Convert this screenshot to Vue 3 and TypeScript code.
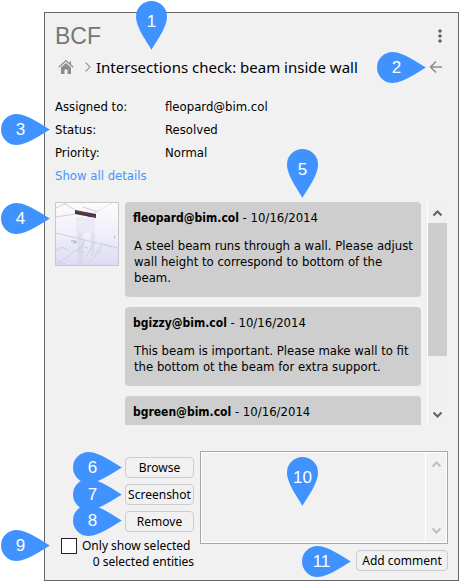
<script setup lang="ts">
import { ref } from 'vue'

interface Detail {
  label: string
  value: string
}

interface Comment {
  author: string
  date: string
  text: string
}

interface Callout {
  id: number
  x: number
  y: number
  dir: 'down' | 'right'
}

const details: Detail[] = [
  { label: 'Assigned to:', value: 'fleopard@bim.col' },
  { label: 'Status:', value: 'Resolved' },
  { label: 'Priority:', value: 'Normal' },
]

const comments: Comment[] = [
  {
    author: 'fleopard@bim.col',
    date: '10/16/2014',
    text: 'A steel beam runs through a wall. Please adjust wall height to correspond to bottom of the beam.',
  },
  {
    author: 'bgizzy@bim.col',
    date: '10/16/2014',
    text: 'This beam is important. Please make wall to fit the bottom ot the beam for extra support.',
  },
  { author: 'bgreen@bim.col', date: '10/16/2014', text: '' },
]

const actions: string[] = ['Browse', 'Screenshot', 'Remove']

// Position of the box around each numbered marker.
const callouts: Callout[] = [
  { id: 1, x: 136, y: 1, dir: 'down' },
  { id: 2, x: 377, y: 52, dir: 'right' },
  { id: 3, x: 1, y: 114, dir: 'right' },
  { id: 4, x: 1, y: 203, dir: 'right' },
  { id: 5, x: 287, y: 149, dir: 'down' },
  { id: 6, x: 73, y: 452, dir: 'right' },
  { id: 7, x: 73, y: 479, dir: 'right' },
  { id: 8, x: 73, y: 505, dir: 'right' },
  { id: 9, x: 1, y: 530, dir: 'right' },
  { id: 10, x: 287, y: 457, dir: 'down' },
  { id: 11, x: 302, y: 546, dir: 'right' },
]

const draft = ref('')
const onlySelected = ref(false)
const list = ref<HTMLElement | null>(null)

function scrollList(step: number): void {
  list.value?.scrollBy({ top: step })
}
</script>

<template>
  <div class="page">
    <main class="panel">
      <header class="title-row">
        <h1 class="title">BCF</h1>
        <button class="icon-button" type="button" aria-label="Menu">
          <svg width="16" height="16" viewBox="0 0 16 16" fill="#5c5f61">
            <circle cx="8" cy="3" r="1.7" />
            <circle cx="8" cy="8" r="1.7" />
            <circle cx="8" cy="13" r="1.7" />
          </svg>
        </button>
      </header>

      <nav class="crumbs">
        <a class="home" href="#" aria-label="Home">
          <svg width="16" height="16" viewBox="0 0 16 16">
            <path d="M0.800 8.200 8 1.600l7.200 6.600" fill="none" stroke="#8c8c8c" stroke-width="1.200" />
            <path d="M11.500 2.500h1.500v3.500L11.500 4.600z" fill="#8c8c8c" />
            <path d="M3 8.400 8 3.900l5 4.500V15H9.500v-4.500H6.500V15H3z" fill="#8c8c8c" />
          </svg>
        </a>
        <svg class="crumb-arrow" width="8" height="12" viewBox="0 0 8 12">
          <path d="M1.500 1.500 6 6l-4.500 4.500" fill="none" stroke="#9b9b9b" stroke-width="1.2" />
        </svg>
        <h2 class="topic">Intersections check: beam inside wall</h2>
        <button class="icon-button back" type="button" aria-label="Back">
          <svg width="16" height="16" viewBox="0 0 16 16" fill="none" stroke="#8c8c8c" stroke-width="1.600">
            <path d="M14 8H3M8 2.500 2.500 8 8 13.500" />
          </svg>
        </button>
      </nav>

      <dl class="details">
        <template v-for="d in details" :key="d.label">
          <dt>{{ d.label }}</dt>
          <dd>{{ d.value }}</dd>
        </template>
      </dl>
      <a class="more" href="#">Show all details</a>

      <section class="thread">
        <svg class="thumb" viewBox="0 0 62 62" role="img" aria-label="Viewpoint">
          <defs>
            <linearGradient id="sky" x1="0" y1="0" x2="0" y2="1">
              <stop offset="0" stop-color="#fcfcfc" />
              <stop offset="0.5" stop-color="#f0effa" />
              <stop offset="1" stop-color="#dcdbf5" />
            </linearGradient>
          </defs>
          <rect width="62" height="62" fill="url(#sky)" />
          <path d="M20 14 39 15V30H20z" fill="#e4e4ee" opacity="0.600" />
          <path d="M21 30h6v32h-5zM35 30h4l-1 23h-3z" fill="#d4d4e2" opacity="0.500" />
          <g fill="none" stroke="#cfcfda" stroke-width="1">
            <path d="M8 0 20 8M27 4 42 9M0 14 19 11M0 5 10 0M0 30 62 45M0 62 26 43M0 48l5-4 7 3M28 40l-5 8 6 2M29 37l-3 6 6 2M38 40l-8 14M40 50l7-9 9 3M32 60l14-14" />
            <path d="M38 10 56 0M0 57 12 62" opacity="0.500" />
          </g>
          <path d="M15 38h5M17 40l4-1" stroke="#a8a8b2" stroke-width="1" />
          <path d="M58 34h1" stroke="#777" />
          <path d="M19 7 40 11v4L19 11z" fill="#393b3d" />
          <path d="M21 8 39 13.500" fill="none" stroke="#a32c3c" stroke-width="1" />
          <path d="M31 12l4 1.500" stroke="#2525b5" stroke-width="1.600" />
        </svg>

        <div ref="list" class="comments">
          <article v-for="c in comments" :key="c.author" class="comment">
            <p class="byline"><b>{{ c.author }}</b> - {{ c.date }}</p>
            <p class="text">{{ c.text }}</p>
          </article>
        </div>

        <div class="scrollbar">
          <button class="scroll-button" type="button" aria-label="Scroll up" @click="scrollList(-20)">
            <svg width="11" height="8" viewBox="0 0 11 8"><path d="M1.500 6.500 5.500 2.500l4 4" /></svg>
          </button>
          <div class="track"><div class="handle"></div></div>
          <button class="scroll-button" type="button" aria-label="Scroll down" @click="scrollList(20)">
            <svg width="11" height="8" viewBox="0 0 11 8"><path d="M1.500 1.500l4 4 4-4" /></svg>
          </button>
        </div>
      </section>

      <form class="composer" @submit.prevent>
        <div class="tools">
          <button v-for="a in actions" :key="a" class="button" type="button">{{ a }}</button>
          <label class="only">
            <input v-model="onlySelected" type="checkbox" />
            <span>Only show selected</span>
          </label>
          <p class="count">0 selected entities</p>
        </div>
        <div class="entry">
          <div class="box">
            <textarea v-model="draft" aria-label="Comment"></textarea>
            <div class="box-scroll">
              <svg width="11" height="8" viewBox="0 0 11 8"><path d="M1.500 6.500 5.500 2.500l4 4" /></svg>
              <svg width="11" height="8" viewBox="0 0 11 8"><path d="M1.500 1.500l4 4 4-4" /></svg>
            </div>
          </div>
          <button class="button add" type="submit">Add comment</button>
        </div>
      </form>
    </main>

    <div
      v-for="c in callouts"
      :key="c.id"
      class="callout"
      :class="c.dir"
      :style="{ left: c.x + 'px', top: c.y + 'px' }"
    >
      <svg v-if="c.dir === 'down'" width="31" height="49" viewBox="0 0 31 49">
        <path d="M15.500 49C12 42 0 27 0 15.500a15.500 15.500 0 0 1 31 0C31 27 19 42 15.500 49z" />
      </svg>
      <svg v-else width="49" height="31" viewBox="0 0 49 31">
        <path d="M49 15.500C42 12 27 0 15.500 0a15.500 15.500 0 0 0 0 31C27 31 42 19 49 15.500z" />
      </svg>
      <span>{{ c.id }}</span>
    </div>
  </div>
</template>

<style>
body {
  margin: 0;
  background: #fff;
}
</style>

<style scoped>
.page {
  position: relative;
  padding: 12px 0 0 44px;
  font: 12px/16px 'Noto Sans', 'DejaVu Sans', sans-serif;
  color: #000;
}

.panel {
  display: flex;
  flex-direction: column;
  padding: 10px;
  padding-bottom: 9px;
  border: 1px solid #666;
  background: #f1f1f1;
}

h1,
h2,
p,
dl,
dd {
  margin: 0;
}

button {
  font: inherit;
  color: inherit;
}

.title-row {
  display: flex;
  align-items: center;
  justify-content: space-between;
  height: 26px;
}

.title {
  font: 23px/26px 'Liberation Sans', sans-serif;
  color: #777;
}

.icon-button {
  display: flex;
  padding: 0;
  border: 0;
  background: none;
}

.crumbs {
  display: flex;
  align-items: center;
  height: 24px;
  margin-top: 6px;
}

.home {
  display: flex;
  margin-left: 3px;
}

.crumb-arrow {
  margin: 0 4px 0 10px;
}

.topic {
  flex: 1;
  font-size: 15px;
  font-weight: 400;
  line-height: 24px;
  white-space: nowrap;
}

.back {
  margin-right: 4px;
}

.details,
.more,
.comments {
  font-family: 'DejaVu Sans Condensed', 'DejaVu Sans', sans-serif;
  font-size: 13px;
}

.details {
  display: grid;
  grid-template-columns: 110px 1fr;
  margin-top: 16px;
  line-height: 23px;
}

.more {
  align-self: flex-start;
  line-height: 23px;
  color: #4296fd;
  text-decoration: none;
}

.thread {
  display: flex;
  height: 223px;
  margin-top: 15px;
}

.thumb {
  flex: none;
  width: 62px;
  height: 62px;
  margin-right: 6px;
  border: 1px solid #c9c9c9;
}

.comments {
  display: flex;
  flex: 1;
  flex-direction: column;
  gap: 10px;
  min-width: 0;
  overflow: hidden;
}

.comment {
  flex: none;
  padding: 8px 4px 11px 8px;
  border-radius: 4px;
  background: #cecece;
}

.byline b {
  font-size: 12px;
}

.text {
  margin: 12px 0 0 1px;
}

.scrollbar {
  display: flex;
  flex-direction: column;
  width: 19px;
  margin: 0 1px 0 6px;
  border-left: 1px solid #fff;
}

.scroll-button {
  display: flex;
  align-items: center;
  justify-content: center;
  height: 21px;
  padding: 0;
  border: 0;
  background: #f0f0f0;
}

.scroll-button path {
  fill: none;
  stroke: #606060;
  stroke-width: 2;
}

.track {
  flex: 1;
  background: #f0f0f0;
}

.handle {
  height: 133px;
  background: #cdcdcd;
}

.composer {
  display: flex;
  gap: 6px;
  margin-top: 26px;
}

.tools {
  display: flex;
  flex-direction: column;
  align-items: flex-end;
  gap: 6px;
  width: 139px;
  padding-top: 6px;
}

.button {
  box-sizing: border-box;
  width: 69px;
  height: 21px;
  padding: 0;
  border: 1px solid #ccc;
  border-radius: 4px;
  background: #f1f1f1;
  line-height: 19px;
  white-space: nowrap;
}

.only {
  display: flex;
  align-self: stretch;
  align-items: center;
  gap: 5px;
  height: 16px;
  padding-left: 6px;
  white-space: nowrap;
}

.only input {
  flex: none;
  width: 16px;
  height: 16px;
  margin: 0;
  border: 1px solid #222;
  background: #fff;
  appearance: none;
}

.only input:checked {
  background: #4296fd;
}

.count {
  margin-top: -6px;
  white-space: nowrap;
}

.entry {
  display: flex;
  flex: 1;
  flex-direction: column;
  align-items: flex-end;
  gap: 6px;
  min-width: 0;
}

.box {
  display: flex;
  box-sizing: border-box;
  align-self: stretch;
  height: 93px;
  border: 1px solid #a5a5a5;
  box-shadow: inset 0 0 0 1px #fff;
  padding: 1px;
}

.box textarea {
  flex: 1;
  min-width: 0;
  padding: 4px;
  border: 0;
  outline: 0;
  resize: none;
  overflow: hidden;
  background: none;
  font: inherit;
}

.box-scroll {
  display: flex;
  flex-direction: column;
  align-items: center;
  justify-content: space-between;
  box-sizing: border-box;
  width: 21px;
  padding: 7px 0;
  border-left: 1px solid #fff;
}

.box-scroll path {
  fill: none;
  stroke: #bfbfbf;
  stroke-width: 2;
}

.add {
  width: 92px;
}

.callout {
  position: absolute;
  display: grid;
  font: 17px/31px 'Liberation Sans', sans-serif;
  color: #fff;
}

.callout svg,
.callout span {
  grid-area: 1 / 1;
}

.callout svg {
  fill: #4093ff;
}

.callout span {
  width: 31px;
  height: 31px;
  text-align: center;
}

.callout.down span {
  padding-top: 5px;
}

.callout.right span {
  padding-left: 4px;
}
</style>
